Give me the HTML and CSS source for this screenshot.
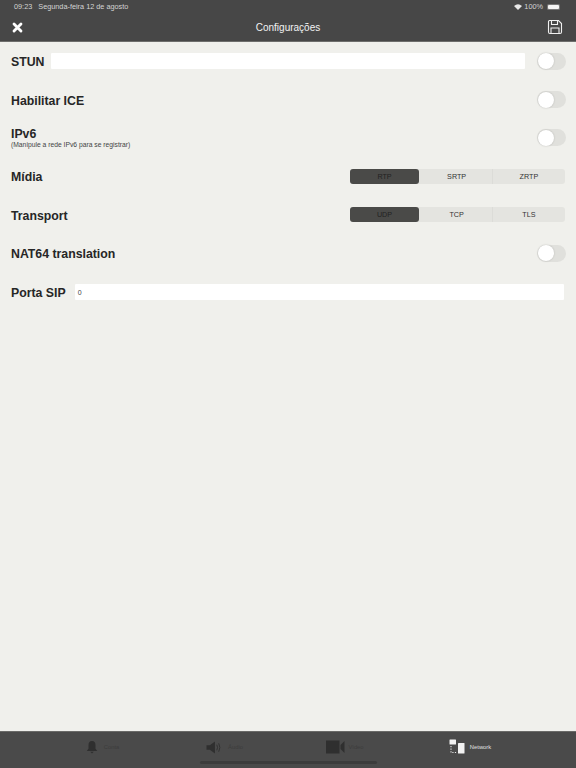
FILE: index.html
```html
<!DOCTYPE html>
<html lang="pt">
<head>
<meta charset="utf-8">
<title>Configurações</title>
<link rel="stylesheet" href="styles.css">
</head>
<body>
<div class="app">
  <header class="header">
    <div class="status">
      <span class="time">09:23</span>
      <span class="date">Segunda-feira 12 de agosto</span>
      <span class="status-right">
        <svg class="wifi" viewBox="0 0 12 9" width="8" height="6"><path d="M6 9 L0 3 Q6 -2 12 3 Z" fill="#e8e8e8"/></svg>
        <span class="pct">100%</span>
        <span class="battery"><span class="battery-fill"></span></span>
      </span>
    </div>
    <div class="nav">
      <svg class="close" viewBox="0 0 12 12" width="11" height="11"><path d="M2.2 2.2 L9.8 9.8 M9.8 2.2 L2.2 9.8" stroke="#fff" stroke-width="3.1" stroke-linecap="round" fill="none"/></svg>
      <span class="title">Configurações</span>
      <svg class="save" viewBox="0 0 16 16" width="16" height="16" fill="none" stroke="#f0f0f0" stroke-width="1.1"><path d="M2.5 1.5 H11.5 L14.5 4.5 V13 A1.5 1.5 0 0 1 13 14.5 H3 A1.5 1.5 0 0 1 1.5 13 V2.5 A1 1 0 0 1 2.5 1.5 Z"/><path d="M4.5 1.5 V5.5 H10.5 V1.5"/><path d="M4 14.5 V9 H12 V14.5"/></svg>
    </div>
  </header>

  <main class="content">
    <div class="row">
      <span class="label label-row">STUN</span>
      <span class="field field-stun"></span>
      <span class="toggle"><span class="knob"></span></span>
    </div>
    <div class="row">
      <span class="label label-row">Habilitar ICE</span>
      <span class="toggle"><span class="knob"></span></span>
    </div>
    <div class="row">
      <div class="label-group">
        <span class="label">IPv6</span>
        <span class="hint">(Manipule a rede IPv6 para se registrar)</span>
      </div>
      <span class="toggle"><span class="knob"></span></span>
    </div>
    <div class="row">
      <span class="label label-row">Mídia</span>
      <div class="segment">
        <span class="seg seg-active">RTP</span>
        <span class="seg seg-mid">SRTP</span>
        <span class="seg seg-div">ZRTP</span>
      </div>
    </div>
    <div class="row">
      <span class="label label-row">Transport</span>
      <div class="segment">
        <span class="seg seg-active">UDP</span>
        <span class="seg seg-mid">TCP</span>
        <span class="seg seg-div">TLS</span>
      </div>
    </div>
    <div class="row">
      <span class="label label-row">NAT64 translation</span>
      <span class="toggle"><span class="knob"></span></span>
    </div>
    <div class="row">
      <span class="label label-row">Porta SIP</span>
      <span class="field field-port">0</span>
    </div>
  </main>

  <footer class="tabbar">
    <div class="tab">
      <svg viewBox="0 0 16 16" width="14" height="14"><path d="M8 1 C5 1 4 3 4 6 V10 L2 12.5 H14 L12 10 V6 C12 3 11 1 8 1 Z M6 13.5 H10 L8 15.5 Z" fill="#2f2f2f"/></svg>
      <span class="tab-label">Conta</span>
    </div>
    <div class="tab">
      <svg viewBox="0 0 18 16" width="18" height="15"><path d="M1 5.5 H4.5 L10 1.5 V14.5 L4.5 10.5 H1 Z" fill="#2f2f2f"/><path d="M12 5 Q13.5 8 12 11 M14 3.5 Q16.5 8 14 12.5" stroke="#2f2f2f" fill="none" stroke-width="1"/></svg>
      <span class="tab-label">Áudio</span>
    </div>
    <div class="tab tab-tight">
      <svg viewBox="0 0 19 14" width="19" height="14"><rect x="0" y="0.5" width="13.5" height="13" fill="#2f2f2f"/><path d="M14.5 5 L18.5 1 V13 L14.5 9 Z" fill="#2f2f2f"/></svg>
      <span class="tab-label">Vídeo</span>
    </div>
    <div class="tab tab-active">
      <svg viewBox="0 0 16 16" width="16" height="16"><rect x="0.5" y="0.5" width="6.5" height="5" rx="0.5" fill="#f2f2f2"/><rect x="9" y="4" width="6.5" height="10.5" rx="0.5" fill="#f2f2f2"/><path d="M2 7 V13.5 H7.5" stroke="#e8e8e8" stroke-width="1.1" stroke-dasharray="1.2 1.4" fill="none"/></svg>
      <span class="tab-label">Network</span>
    </div>
    <span class="home-indicator"></span>
  </footer>
</div>
</body>
</html>
```

FILE: styles.css
```css
* { box-sizing: border-box; }
html, body { margin: 0; padding: 0; height: 100%; }
body {
  font-family: "Liberation Sans", Arial, sans-serif;
  background: #f0f0ec;
  color: #222;
}
.app {
  display: flex;
  flex-direction: column;
  width: 576px;
  height: 768px;
  overflow: hidden;
}

/* Header */
.header {
  background: #474747;
  color: #fff;
  height: 42px;
  border-bottom: 1px solid #6e6e6c;
  flex: none;
}
.status {
  display: flex;
  align-items: center;
  height: 13px;
  padding: 0 16px 0 14px;
  font-size: 7.3px;
  color: #d4d4d4;
}
.date { margin-left: 6px; }
.status-right {
  margin-left: auto;
  display: flex;
  align-items: center;
  gap: 2px;
}
.battery {
  display: block;
  width: 13px;
  height: 6px;
  margin-left: 2px;
  padding: 1px;
  border-radius: 1.5px;
  background: #777;
}
.battery-fill {
  display: block;
  height: 100%;
  border-radius: 1px;
  background: #f4f4f4;
}
.nav {
  display: flex;
  align-items: center;
  justify-content: space-between;
  height: 28px;
  padding: 0 13px 0 12px;
  position: relative;
}
.title {
  position: absolute;
  left: 0;
  right: 0;
  text-align: center;
  font-size: 10px;
  color: #f2f2f2;
}

/* Settings */
.content {
  flex: 1;
  padding: 0 11px;
}
.row {
  display: flex;
  align-items: center;
  height: 38.4px;
}
.label {
  font-size: 12.3px;
  font-weight: 700;
  color: #262626;
  line-height: 14px;
}
.label-row { padding-top: 2px; }
.label-group {
  display: flex;
  flex-direction: column;
}
.hint {
  font-size: 6.75px;
  line-height: 7px;
  color: #444;
}
.field {
  display: flex;
  align-items: center;
  height: 16px;
  background: #fff;
  border-radius: 1px;
  font-size: 7px;
  color: #444;
}
.field-stun {
  flex: 1;
  margin: 0 12px 0 6.5px;
}
.field-port {
  flex: 1;
  margin: 1px 1px 0 9px;
  padding-left: 3px;
}
.toggle {
  display: block;
  width: 29px;
  height: 17px;
  margin-left: auto;
  margin-right: -1px;
  border-radius: 9px;
  background: #e0e0dc;
}
.knob {
  display: block;
  width: 16px;
  height: 16px;
  margin: 0.5px;
  border-radius: 50%;
  background: #fff;
  box-shadow: 0 0 2px rgba(0, 0, 0, 0.2);
}
.segment {
  display: flex;
  width: 214.5px;
  height: 15px;
  margin-left: auto;
  margin-right: 0.5px;
  background: #e4e4e0;
  border-radius: 3px;
}
.seg {
  flex: 1;
  display: flex;
  align-items: center;
  justify-content: center;
  font-size: 7.2px;
  color: #333;
}
.seg-active {
  flex: none;
  width: 69px;
  background: #4a4a48;
  color: #222;
  border-radius: 3px;
}
.seg-mid { padding-left: 2px; }
.seg-div { border-left: 1px solid #dcdcd8; }

/* Tab bar */
.tabbar {
  position: relative;
  flex: none;
  display: grid;
  grid-template-columns: 122px 122px 120px 130px;
  height: 37px;
  padding-left: 41px;
  background: #4a4a4a;
  border-top: 1px solid #6a6a68;
}
.tab {
  display: flex;
  align-items: center;
  justify-content: center;
  gap: 5px;
  padding-bottom: 6px;
}
.tab-tight { gap: 3px; }
.tab-label {
  font-size: 5.8px;
  color: #3c3c3c;
}
.tab-active .tab-label { color: #e0e0e0; }
.home-indicator {
  position: absolute;
  left: 200px;
  top: 29px;
  width: 177px;
  height: 2.5px;
  border-radius: 2px;
  background: #3c3c3c;
}
```
